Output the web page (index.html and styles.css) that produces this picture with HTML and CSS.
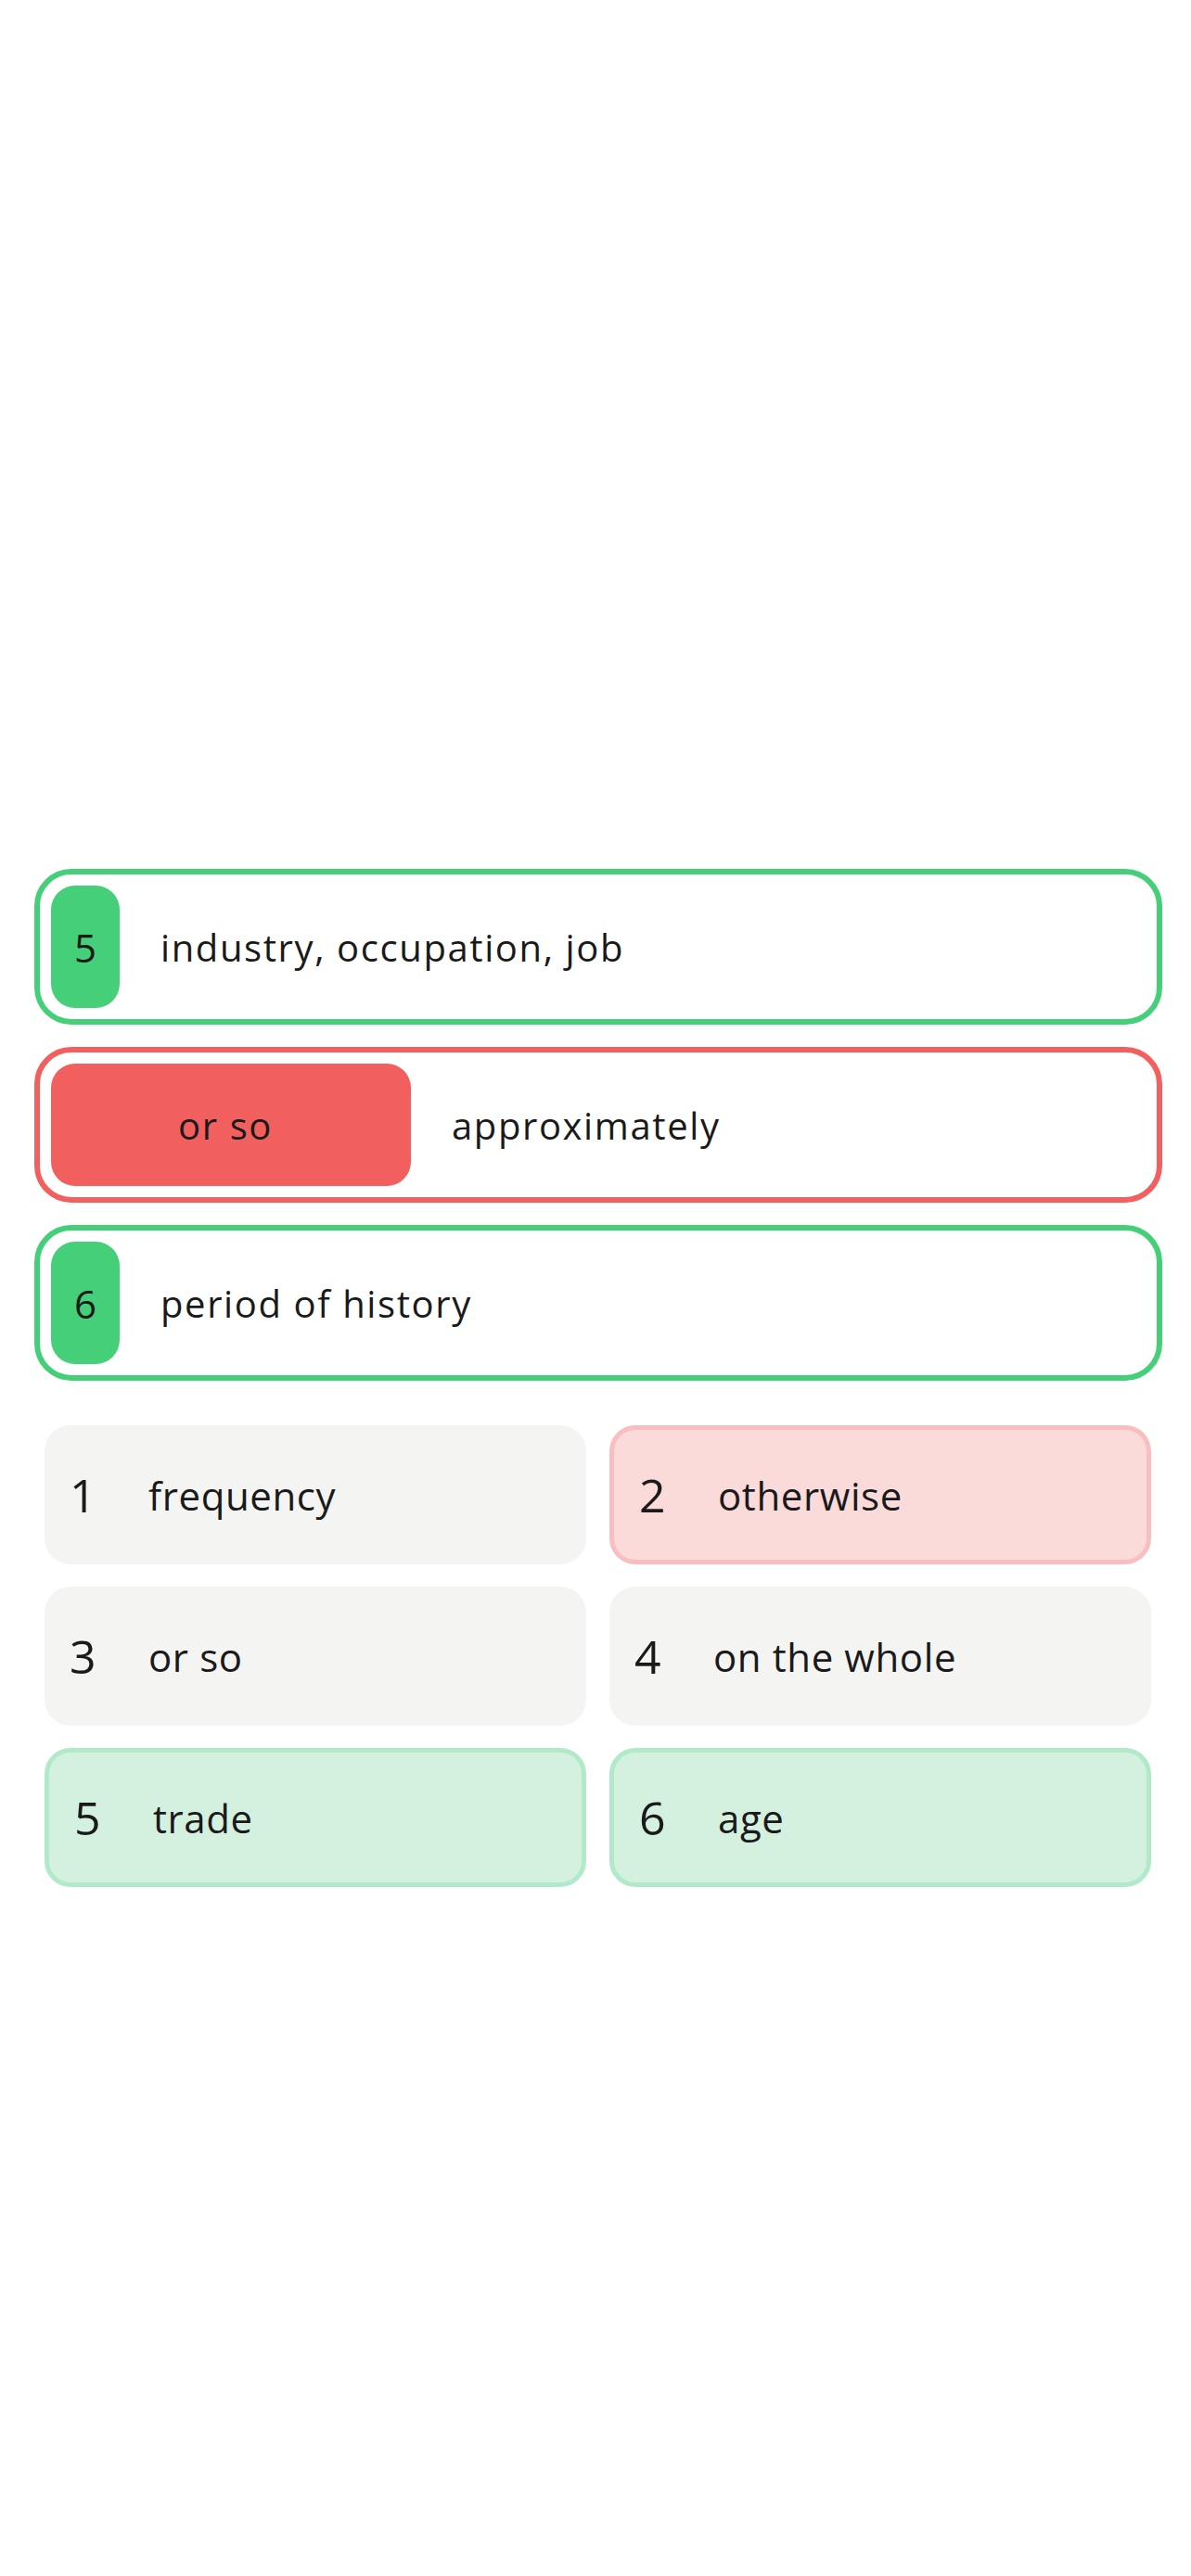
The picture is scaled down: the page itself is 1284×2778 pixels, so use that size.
FILE: index.html
```html
<!DOCTYPE html>
<html lang="en">
<head>
<meta charset="utf-8">
<title>Match</title>
<link rel="stylesheet" href="styles.css">
</head>
<body>
<main class="page">
  <section class="answers">
    <div class="answer answer-ok">
      <div class="tag tag-ok">5</div>
      <div class="meaning">industry, occupation, job</div>
    </div>
    <div class="answer answer-bad">
      <div class="tag tag-bad">or so</div>
      <div class="meaning">approximately</div>
    </div>
    <div class="answer answer-ok">
      <div class="tag tag-ok">6</div>
      <div class="meaning">period of history</div>
    </div>
  </section>
  <section class="options">
    <div class="option"><span class="num">1</span><span class="word">frequency</span></div>
    <div class="option option-bad"><span class="num">2</span><span class="word">otherwise</span></div>
    <div class="option"><span class="num">3</span><span class="word">or so</span></div>
    <div class="option"><span class="num">4</span><span class="word">on the whole</span></div>
    <div class="option option-ok"><span class="num">5</span><span class="word">trade</span></div>
    <div class="option option-ok"><span class="num">6</span><span class="word">age</span></div>
  </section>
</main>
</body>
</html>
```

FILE: styles.css
```css
html, body {
  margin: 0;
  padding: 0;
  background: #ffffff;
}

body {
  font-family: "Open Sans", "Noto Sans", sans-serif;
  color: #1a1a1a;
}

.page {
  padding: 937px 31px 0 37px;
}

.answers {
  display: flex;
  flex-direction: column;
  gap: 24px;
}

.answer {
  display: flex;
  align-items: center;
  gap: 44px;
  height: 168px;
  box-sizing: border-box;
  border: 6px solid;
  border-radius: 40px;
  padding: 0 12px;
}

.answer-ok { border-color: #44cf78; }
.answer-bad { border-color: #f25f5f; }

.tag {
  height: 132px;
  box-sizing: border-box;
  display: flex;
  align-items: center;
  justify-content: center;
  border-radius: 26px;
  font-size: 42px;
  color: #1a1a1a;
}

.tag-ok {
  width: 74px;
  background: #44cf78;
}

.tag-bad {
  width: 388px;
  background: #f25f5f;
  font-size: 40px;
  letter-spacing: 1.6px;
  padding-right: 12px;
}

.meaning {
  font-size: 40px;
  letter-spacing: 1.6px;
}

.options {
  margin: 48px 12px 0 11px;
  display: grid;
  grid-template-columns: 1fr 1fr;
  column-gap: 25px;
  row-gap: 24px;
}

.option {
  height: 150px;
  box-sizing: border-box;
  display: flex;
  align-items: center;
  padding-left: 27px;
  border-radius: 28px;
  background: #f4f4f2;
}

.option-bad {
  background: #fbdada;
  border: 5px solid #f9bebf;
}

.option-ok {
  background: #d4f1e0;
  border: 5px solid #b0eac8;
}

.num {
  width: 85px;
  font-size: 50px;
  flex: none;
}

.word {
  font-size: 42px;
  letter-spacing: 0.6px;
}
```
